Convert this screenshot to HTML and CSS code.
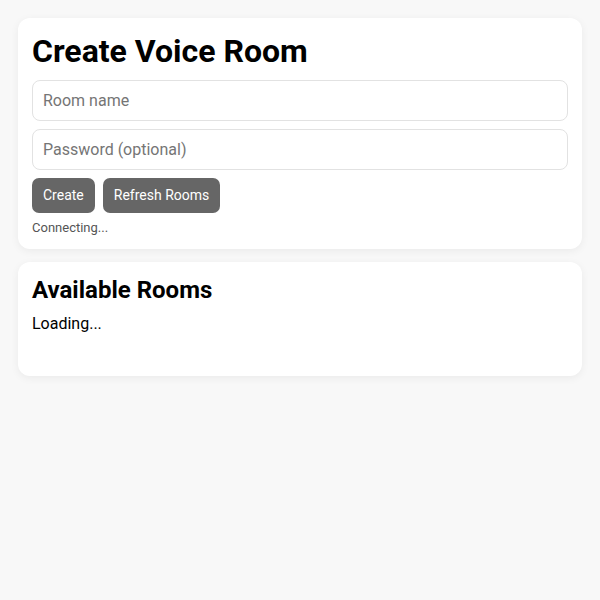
FILE: index.html
```html
<!DOCTYPE html>
<html lang="en">
<head>
    <meta charset="UTF-8">
    <meta name="viewport" content="width=device-width, initial-scale=1.0">
    <title>Voice Rooms</title>
<link rel="stylesheet" href="styles.css">
</head>
<body>
    <div class="card">
        <h1>Create Voice Room</h1>
        <input class="field" type="text" placeholder="Room name" autocomplete="off"/>
        <input class="field" type="password" placeholder="Password (optional)"/>
        <div class="btn_box">
            <button class="btn">Create</button>
            <button class="btn">Refresh Rooms</button>
        </div>
        <div class="status">Connecting...</div>
    </div>
    <div class="card">
        <h2>Available Rooms</h2>
        <div class="rooms">Loading...</div>
    </div>
</body>
</html>
```

FILE: styles.css
```css
*{
    margin:0;
    padding:0;
    box-sizing: border-box;
}
body{
    background: #f8f8f8;
    font-family: Roboto, "Liberation Sans", sans-serif;
    color: #000;
    padding: 18px;
    display: flex;
    flex-direction: column;
    gap: 13px;
}
.card{
    background: #fff;
    border-radius: 12px;
    padding: 14px;
    box-shadow: 0 2px 8px rgba(0,0,0,0.06);
}
h1{
    font-size: 32px;
    line-height: 38px;
    font-weight: 700;
    margin-bottom: 10px;
}
h2{
    font-size: 24px;
    line-height: 28px;
    font-weight: 700;
    margin-bottom: 10px;
}
.field{
    display: block;
    width: 100%;
    font-family: inherit;
    font-size: 16px;
    line-height: 19px;
    padding: 10px;
    border: 1px solid #e2e2e2;
    border-radius: 8px;
    margin-bottom: 8px;
    color: #222;
}
.field::placeholder{
    color: #757575;
}
.btn_box{
    display: flex;
    gap: 8px;
}
.btn{
    font-family: inherit;
    font-size: 14px;
    line-height: 17px;
    padding: 9px 11px;
    background: #666;
    color: #fff;
    border: none;
    border-radius: 7px;
}
.status{
    margin-top: 7px;
    font-size: 13px;
    line-height: 15px;
    color: #555;
}
.rooms{
    font-size: 16px;
    line-height: 19px;
    min-height: 48px;
}
```
